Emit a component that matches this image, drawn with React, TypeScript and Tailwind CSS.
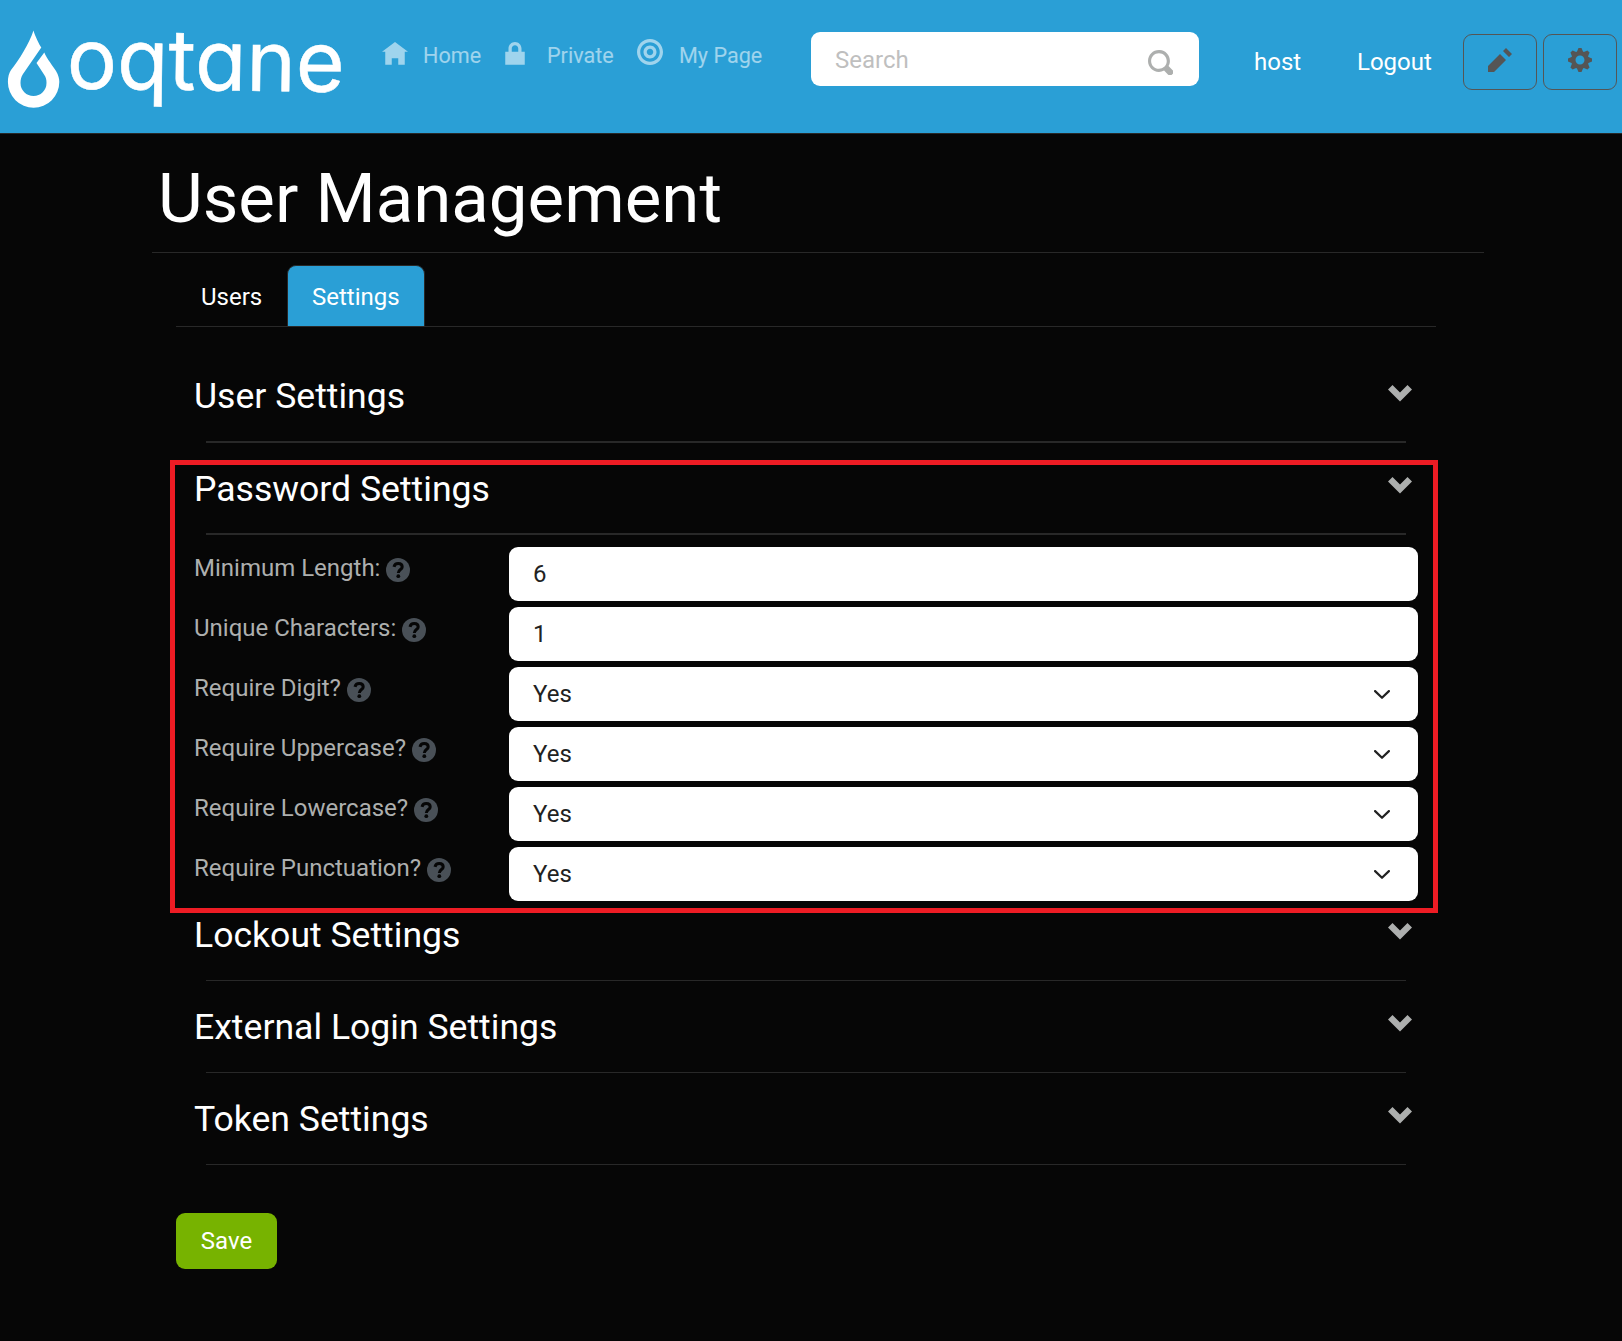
import React from 'react';

const PATHS = {
  home: 'M4 0l-4 3h1v4h2v-2h2v2h2v-4.03l1 .03-4-3z',
  lock: 'M4 0c-1.1 0-2 .9-2 2v1h-1v4h6v-4h-1v-1c0-1.1-.9-2-2-2zm0 1c.56 0 1 .44 1 1v1h-2v-1c0-.56.44-1 1-1z',
  target:
    'M4 0c-2.2 0-4 1.8-4 4s1.8 4 4 4 4-1.8 4-4-1.8-4-4-4zm0 1c1.66 0 3 1.34 3 3s-1.34 3-3 3-3-1.34-3-3 1.34-3 3-3zm0 1c-1.1 0-2 .9-2 2s.9 2 2 2 2-.9 2-2-.9-2-2-2zm0 1c.56 0 1 .44 1 1s-.44 1-1 1-1-.44-1-1 .44-1 1-1z',
  search:
    'M3.5 0c-1.93 0-3.5 1.57-3.5 3.5s1.57 3.5 3.5 3.5c.59 0 1.17-.14 1.66-.41a1 1 0 0 0 .13.13l1 1a1.02 1.02 0 1 0 1.44-1.44l-1-1a1 1 0 0 0-.16-.13c.27-.49.44-1.06.44-1.66 0-1.93-1.55-3.5-3.5-3.5zm0 1c1.39 0 2.5 1.11 2.5 2.5 0 .66-.24 1.27-.66 1.72-.01.01-.02.02-.03.03a1 1 0 0 0-.13.13c-.44.4-1.04.63-1.69.63-1.39 0-2.5-1.11-2.5-2.5s1.11-2.5 2.5-2.5z',
  pencil: 'M6 0l-1 1 2 2 1-1-2-2zm-2 2l-4 4v2h2l4-4-2-2z',
  cog: 'M3.5 0l-.5 1.19c-.1.03-.19.08-.28.13l-1.19-.5-.72.72.5 1.19c-.05.1-.09.18-.13.28l-1.19.5v1l1.19.5c.04.1.08.18.13.28l-.5 1.19.72.72 1.19-.5c.09.04.18.09.28.13l.5 1.19h1l.5-1.19c.09-.04.19-.08.28-.13l1.19.5.72-.72-.5-1.19c.04-.09.09-.19.13-.28l1.19-.5v-1l-1.19-.5c-.03-.09-.08-.19-.13-.28l.5-1.19-.72-.72-1.19.5c-.09-.04-.19-.09-.28-.13l-.5-1.19h-1zm.5 2.5c.83 0 1.5.67 1.5 1.5s-.67 1.5-1.5 1.5-1.5-.67-1.5-1.5.67-1.5 1.5-1.5z',
  chevron: 'M1.5 0l-1.5 1.5 4 4 4-4-1.5-1.5-2.5 2.5-2.5-2.5z',
};

function Icon({ name, className }: { name: keyof typeof PATHS; className: string }) {
  return (
    <svg viewBox="0 0 8 8" fill="currentColor" className={`shrink-0 ${className}`}>
      <path d={PATHS[name]} />
    </svg>
  );
}

function HelpIcon() {
  return (
    <svg viewBox="0 0 24 24" className="mt-[8px] ml-[6px] size-[24px] shrink-0">
      <circle cx="12" cy="12" r="12" fill="#495057" />
      <path d="M8 8.800C8.500 6.700 10.200 5.600 12.200 5.600C14.700 5.600 16.200 6.900 16.200 8.900C16.200 11.600 12.300 11.500 12.300 15" fill="none" stroke="#060606" strokeWidth="3" />
      <circle cx="12.300" cy="18.200" r="1.900" fill="#060606" />
    </svg>
  );
}

function Logo() {
  return (
    <svg viewBox="0 0 350 133" className="h-[133px] w-[350px] shrink-0 overflow-visible" fill="white">
      <path d="M33.500 30.500C35 36 39 44 41.300 47.500L23 74C21 77 20.500 80 20.500 83A13 13 0 0 0 46.500 83C46.500 80 46 77 44 74.500L36.500 63L44.300 52.500C47 59 53 66 56 71C58.500 75 59.300 79 59.300 82A25.700 25.700 0 0 1 7.900 82C7.900 77 9 73 11 70C19 60 29 44 33.500 30.500Z" />
      <text
        x="66.500"
        y="88.500"
        textLength="278"
        lengthAdjust="spacingAndGlyphs"
        transform="rotate(0.700 66 88)"
        stroke="white"
        strokeWidth="0.5"
        className="font-['Inter',sans-serif] text-[84px] font-normal [font-feature-settings:'cv11']"
      >
        oqtane
      </text>
    </svg>
  );
}

function Header() {
  return (
    <header className="flex h-[134px] items-start border-b border-[#282828] bg-[#2a9fd6] text-2xl leading-9">
      <Logo />
      <nav className="mt-[37px] flex w-[461px] text-[21.6px] text-white/55">
        <a className="flex w-[123px] pl-[32px]">
          <Icon name="home" className="mt-[5px] mr-[15px] size-[26px]" />
          <span className="pt-px">Home</span>
        </a>
        <a className="flex w-[133px] pl-[29px]">
          <Icon name="lock" className="mt-[5px] mr-[19px] size-[26px]" />
          <span className="pt-px">Private</span>
        </a>
        <a className="flex pl-[31px] whitespace-nowrap">
          <Icon name="target" className="mt-[2px] mr-[16px] size-[26px]" />
          <span className="pt-px">My Page</span>
        </a>
      </nav>
      <div className="mt-[32px] flex h-[54px] w-[388px] items-start justify-between rounded-[9px] bg-white pt-[10px] pr-[26px] pl-[24px] text-[#bfbfbf]">
        <span>Search</span>
        <Icon name="search" className="mt-[8px] size-[25px] text-[#adafae]" />
      </div>
      <a className="mt-[44px] ml-[55px] w-[103px] text-white">host</a>
      <a className="mt-[44px] w-[106px] text-white">Logout</a>
      <div className="mt-[34px] flex gap-[6px] text-[#555]">
        <button className="flex h-[56px] w-[74px] justify-center rounded-[9px] border border-[#555] pt-[13px]">
          <Icon name="pencil" className="size-[24px]" />
        </button>
        <button className="flex h-[56px] w-[74px] justify-center rounded-[9px] border border-[#555] pt-[13px]">
          <Icon name="cog" className="size-[24px]" />
        </button>
      </div>
    </header>
  );
}

function Section({ title, thick, first }: { title: string; thick?: boolean; first?: boolean }) {
  return (
    <div className="h-[92px] pt-[2px]">
      <div className={`flex justify-between pr-[26px] pl-[24px] ${thick ? 'h-[69px]' : 'h-[70px]'}`}>
        <h5 className={`text-[35.6px] leading-[43px] text-white ${first ? 'mt-[3px]' : 'mt-[4px]'}`}>{title}</h5>
        <Icon name="chevron" className="mt-[13px] size-[24px] text-[#adafae]" />
      </div>
      <div className={`mr-[32px] ml-[36px] bg-[#282828] ${thick ? 'h-[2px]' : 'h-px'}`} />
    </div>
  );
}

const FIELDS = [
  { label: 'Minimum Length:', value: '6', select: false },
  { label: 'Unique Characters:', value: '1', select: false },
  { label: 'Require Digit?', value: 'Yes', select: true },
  { label: 'Require Uppercase?', value: 'Yes', select: true },
  { label: 'Require Lowercase?', value: 'Yes', select: true },
  { label: 'Require Punctuation?', value: 'Yes', select: true },
];

function Field({ label, value, select }: (typeof FIELDS)[number]) {
  return (
    <div className="flex h-[54px] pr-[20px] pl-[24px]">
      <label className="flex w-[315px] pt-[3px] leading-9 text-[#adafae]">
        {label}
        <HelpIcon />
      </label>
      <div className="flex flex-1 items-center justify-between rounded-[9px] bg-white pr-[28px] pl-[24px] text-[#222]">
        <span className="leading-9">{value}</span>
        {select && (
          <svg viewBox="0 0 16 9" className="h-[9px] w-[16px]" fill="none" stroke="#222" strokeWidth="2.2" strokeLinecap="round" strokeLinejoin="round">
            <path d="M1.100 1.100l6.900 6.700 6.900-6.700" />
          </svg>
        )}
      </div>
    </div>
  );
}

export default function App() {
  return (
    <div className="h-[1341px] w-[1622px] overflow-hidden bg-[#060606] font-['Roboto',sans-serif] text-2xl">
      <Header />
      <main className="ml-[152px] w-[1332px]">
        <h1 className="h-[119px] border-b border-[#282828] pt-[24px] pl-[6px] text-[69px] leading-[82px] text-white">
          User Management
        </h1>
        <div className="mr-[48px] ml-[24px] flex border-b border-[#282828] pt-[12px] leading-9 text-white">
          <div className="h-[61px] w-[111px] pt-[14px] pl-[25px]">Users</div>
          <div className="h-[61px] w-[138px] rounded-t-[9px] border border-b-0 border-[#282828] bg-[#2a9fd6] pt-[13px] pl-[24px]">
            Settings
          </div>
        </div>
        <div className="mt-[43px] mr-[46px] ml-[18px]">
          <Section title="User Settings" thick first />
          <div className="relative">
            <Section title="Password Settings" thick />
            <div className="-mt-[7px] flex flex-col gap-[6px]">
              {FIELDS.map((f) => (
                <Field key={f.label} {...f} />
              ))}
            </div>
            <div className="pointer-events-none absolute inset-x-0 -top-[2px] -bottom-[12px] border-5 border-[#ed1c24]" />
          </div>
          <div className="mt-[7px]">
            <Section title="Lockout Settings" />
            <Section title="External Login Settings" />
            <Section title="Token Settings" />
          </div>
          <button className="mt-[29px] ml-[6px] block h-[56px] w-[101px] rounded-[9px] bg-[#77b300] text-white">Save</button>
        </div>
      </main>
    </div>
  );
}
